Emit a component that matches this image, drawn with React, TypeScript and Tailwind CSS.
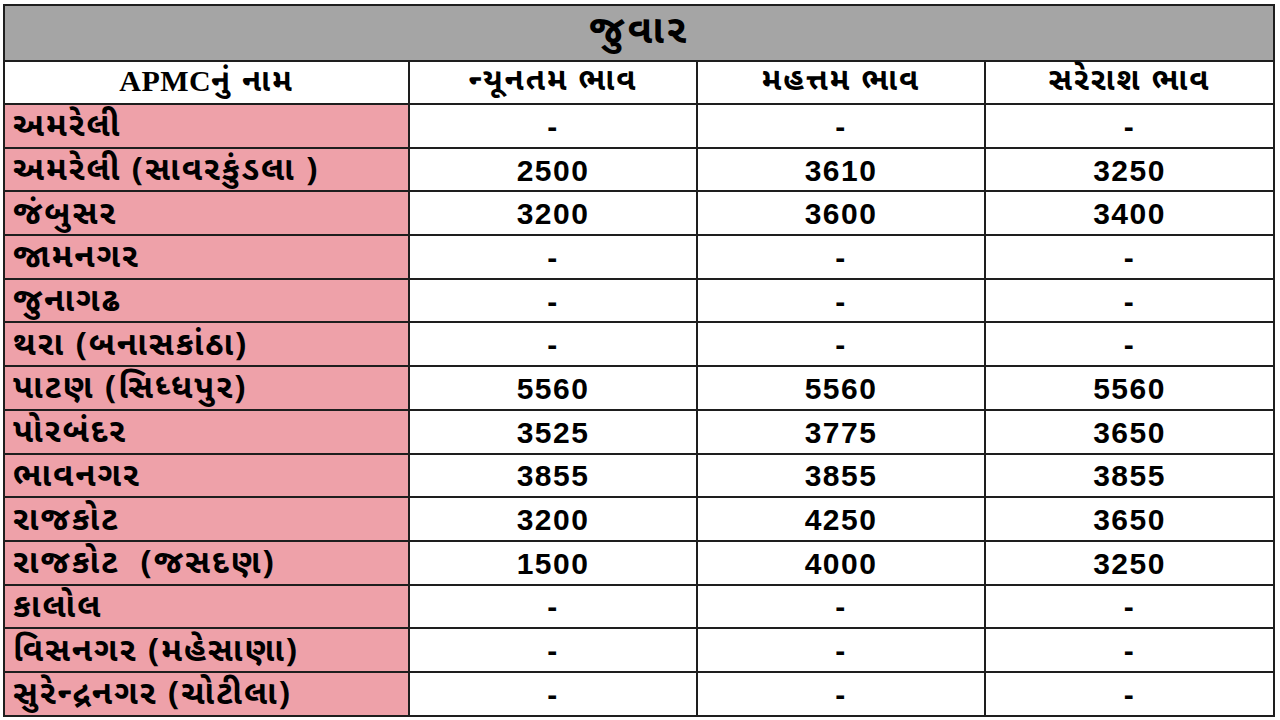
const rows: [string, string, string, string][] = [
  ["અમરેલી", "-", "-", "-"],
  ["અમરેલી (સાવરકુંડલા )", "2500", "3610", "3250"],
  ["જંબુસર", "3200", "3600", "3400"],
  ["જામનગર", "-", "-", "-"],
  ["જુનાગઢ", "-", "-", "-"],
  ["થરા (બનાસકાંઠા)", "-", "-", "-"],
  ["પાટણ (સિધ્ધપુર)", "5560", "5560", "5560"],
  ["પોરબંદર", "3525", "3775", "3650"],
  ["ભાવનગર", "3855", "3855", "3855"],
  ["રાજકોટ", "3200", "4250", "3650"],
  ["રાજકોટ  (જસદણ)", "1500", "4000", "3250"],
  ["કાલોલ", "-", "-", "-"],
  ["વિસનગર (મહેસાણા)", "-", "-", "-"],
  ["સુરેન્દ્રનગર (ચોટીલા)", "-", "-", "-"],
];

const guj = "font-['Noto_Sans_Gujarati','Lohit_Gujarati','Shruti','Noto_Sans',sans-serif]";
const cell = "border-2 border-[#1e1e1e]";

export default function App() {
  return (
    <div className="w-[1280px] h-[720px] bg-white pt-[4px] pl-[3px]">
      <table className={`border-collapse ${cell} table-fixed w-[1270px] text-black`}>
        <colgroup>
          <col className="w-[405px]" />
          <col className="w-[288px]" />
          <col className="w-[288px]" />
          <col className="w-[289px]" />
        </colgroup>
        <tbody>
          <tr className="h-[56px] bg-[#a5a5a5]">
            <td colSpan={4} className={`${cell} text-center text-[40px] tracking-[3px] font-bold leading-none ${guj}`}>
              જુવાર
            </td>
          </tr>
          <tr className="h-[43px] bg-white">
            <td className={`${cell} text-center text-[31px] tracking-[2px] font-bold leading-none ${guj}`}>
              <span className="font-['Liberation_Serif',serif] text-[30px] tracking-[0.5px]">APMC</span>નું નામ
            </td>
            <td className={`${cell} text-center text-[31px] tracking-[2px] font-bold leading-none ${guj}`}>ન્યૂનતમ ભાવ</td>
            <td className={`${cell} text-center text-[31px] tracking-[2px] font-bold leading-none ${guj}`}>મહત્તમ ભાવ</td>
            <td className={`${cell} text-center text-[31px] tracking-[2px] font-bold leading-none ${guj}`}>સરેરાશ ભાવ</td>
          </tr>
          {rows.map((r, i) => (
            <tr key={i} className="h-[43.7px]">
              <td className={`${cell} bg-[#eea1a9] pl-[8px] pt-[4px] text-left text-[33px] tracking-[2px] font-bold leading-none whitespace-pre ${guj}`}>
                {r[0]}
              </td>
              {r.slice(1).map((v, j) => (
                <td
                  key={j}
                  className={`${cell} bg-white pt-[2px] text-center text-[30px] tracking-[1.5px] font-bold leading-none font-['Liberation_Sans',Arial,sans-serif]`}
                >
                  {v}
                </td>
              ))}
            </tr>
          ))}
        </tbody>
      </table>
    </div>
  );
}
